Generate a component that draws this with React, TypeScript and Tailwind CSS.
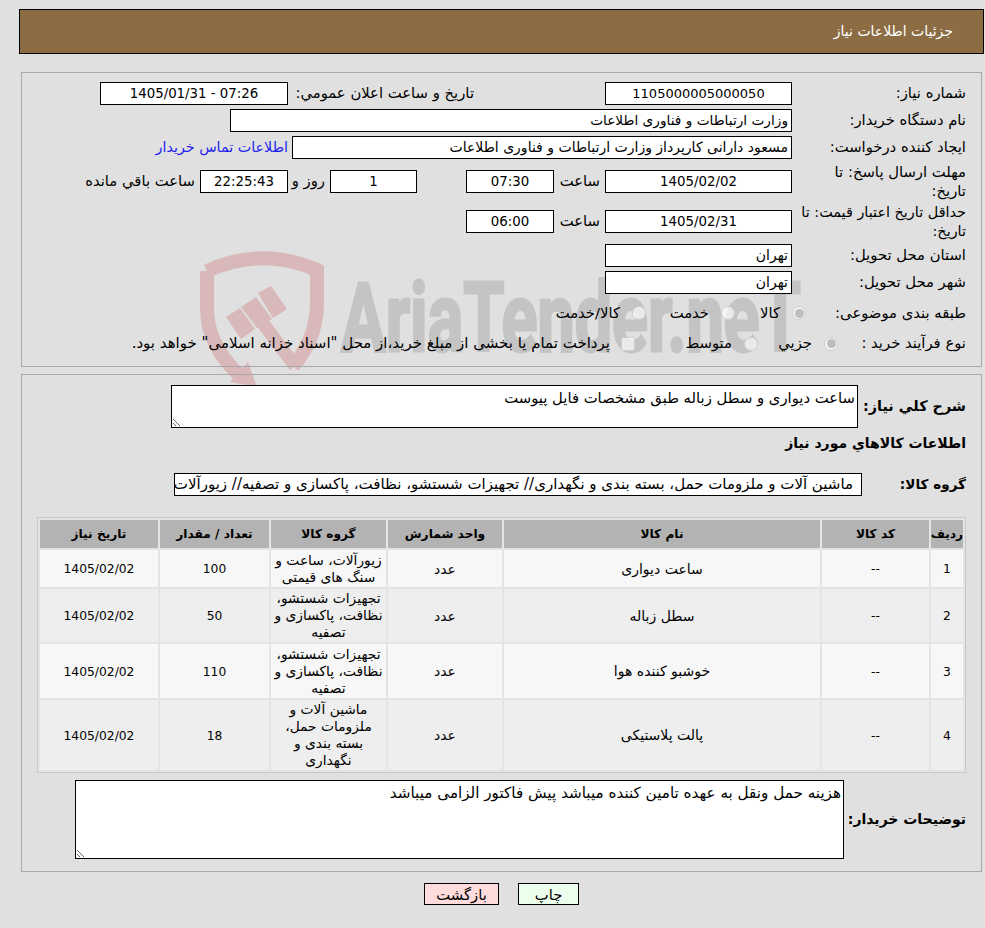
import type { ReactNode } from "react";

function Box({ className, children }: { className: string; children?: ReactNode }) {
  return (
    <div className={"h-[23px] shrink-0 overflow-hidden whitespace-nowrap border border-black bg-white leading-[21px] " + className}>
      {children}
    </div>
  );
}

function Radio({ checked }: { checked?: boolean }) {
  return (
    <span className="flex h-[14px] w-[14px] shrink-0 items-center justify-center rounded-full border border-[#cdcdcd] bg-white/65">
      {checked && <span className="h-[9px] w-[9px] rounded-full bg-[#bdbdbd]" />}
    </span>
  );
}

function Option({ className, checked, children }: { className: string; checked?: boolean; children: ReactNode }) {
  return (
    <div className={"flex shrink-0 items-center gap-3 whitespace-nowrap " + className}>
      <Radio checked={checked} />
      <span>{children}</span>
    </div>
  );
}

function Watermark() {
  return (
    <svg dir="ltr" className="absolute left-0 top-0" width="985" height="928" viewBox="0 0 985 928" fill="none">
      <g stroke="#d9b8b9" strokeWidth="14">
        <path d="M207 271 Q262 246 317 270 L317 305 Q316 340 293 366" />
        <path d="M207 271 L207 310 Q208 345 238 374" />
        <path d="M262 322 L295 366" strokeWidth="13" />
      </g>
      <g fill="#d9b8b9">
        <path d="M248 362 L257 387 L230 382 Z" />
        <path d="M226 317 L240 308 L255 329 L241 339 Z" />
        <path d="M241 307 L256 297 L272 319 L257 328 Z" />
        <path d="M258 293 L271 286 L287 309 L273 318 Z" />
      </g>
      <text x="341" y="351" direction="ltr" fill="#c4c4c4" stroke="#c4c4c4" strokeWidth="3" fontFamily="Roboto, sans-serif" fontWeight="700" fontSize="97" textLength="460" lengthAdjust="spacingAndGlyphs">
        AriaTender.neT
      </text>
    </svg>
  );
}

const rows = [
  { n: "1", name: "ساعت دیواری", group: "زیورآلات، ساعت و سنگ های قیمتی", qty: "100", h: "h-[37px]", bg: "bg-[#f7f7f7]" },
  { n: "2", name: "سطل زباله", group: "تجهیزات شستشو، نظافت، پاکسازی و تصفیه", qty: "50", h: "h-[53px]", bg: "bg-[#eeeeee]" },
  { n: "3", name: "خوشبو کننده هوا", group: "تجهیزات شستشو، نظافت، پاکسازی و تصفیه", qty: "110", h: "h-[54px]", bg: "bg-[#f7f7f7]" },
  { n: "4", name: "پالت پلاستیکی", group: "ماشین آلات و ملزومات حمل، بسته بندی و نگهداری", qty: "18", h: "h-[70px]", bg: "bg-[#eeeeee]" },
];

const heads = [
  { t: "ردیف", w: "w-[32px]" },
  { t: "کد کالا", w: "w-[107px]" },
  { t: "نام کالا", w: "w-[316px]" },
  { t: "واحد شمارش", w: "w-[114px]" },
  { t: "گروه کالا", w: "w-[115px]" },
  { t: "تعداد / مقدار", w: "w-[109px]" },
  { t: "تاریخ نیاز", w: "w-[118px]" },
];

export default function App() {
  return (
    <div dir="rtl" className="relative h-[928px] w-[985px] overflow-hidden bg-[#e0e0e0] font-['DejaVu_Sans',sans-serif] text-[14.8px] text-black">
      <Watermark />
      <div className="relative pt-[9px]">
        <header className="ml-[19px] mr-px flex h-[45px] items-center border border-black bg-[#8c6d43] pr-[30px] text-[14px] text-white">
          جزئیات اطلاعات نیاز
        </header>

        <section className="ml-[21px] mr-[3px] mt-[18px] h-[295px] border border-[#a8a8a8] pr-[15px] pt-[7px]">
          <div className="flex h-[27px] items-center">
            <div className="w-[174px] shrink-0">شماره نیاز:</div>
            <Box className="w-[187px] text-center text-[13px]">1105000005000050</Box>
            <div className="mr-[131px] w-[186px] shrink-0 whitespace-nowrap">تاریخ و ساعت اعلان عمومي:</div>
            <Box className="w-[188px] text-center text-[13.33px]">
              <span dir="ltr">1405/01/31 - 07:26</span>
            </Box>
          </div>
          <div className="flex h-[27px] items-center">
            <div className="w-[174px] shrink-0">نام دستگاه خریدار:</div>
            <Box className="w-[562px] pr-[3px] text-[13.7px]">وزارت ارتباطات و فناوری اطلاعات</Box>
          </div>
          <div className="flex h-[27px] items-center">
            <div className="w-[174px] shrink-0">ایجاد کننده درخواست:</div>
            <Box className="w-[500px] pr-[3px] text-[14px]">مسعود دارانی کارپرداز وزارت ارتباطات و فناوری اطلاعات</Box>
            <a className="mr-[4px] whitespace-nowrap text-[14.3px] text-[#1f1fee]">اطلاعات تماس خریدار</a>
          </div>
          <div className="flex h-[40px] items-center">
            <div className="w-[174px] shrink-0 pl-[6px] leading-[19px]">مهلت ارسال پاسخ: تا تاریخ:</div>
            <Box className="w-[187px] text-center text-[13.33px]">1405/02/02</Box>
            <div className="mr-[5px] w-[46px] shrink-0">ساعت</div>
            <Box className="w-[88px] text-center text-[13.33px]">07:30</Box>
            <Box className="mr-[49px] w-[87px] text-center text-[13.33px]">1</Box>
            <div className="mr-[5px] w-[37px] shrink-0">روز و</div>
            <Box className="w-[88px] bg-[#ffffee] text-center text-[13.33px]">22:25:43</Box>
            <div className="mr-[5px] whitespace-nowrap">ساعت باقي مانده</div>
          </div>
          <div className="flex h-[41px] items-center">
            <div className="w-[174px] shrink-0 text-[14.4px] leading-[19px]">حداقل تاریخ اعتبار قیمت: تا تاریخ:</div>
            <Box className="w-[187px] text-center text-[13.33px]">1405/02/31</Box>
            <div className="mr-[5px] w-[46px] shrink-0">ساعت</div>
            <Box className="w-[88px] text-center text-[13.33px]">06:00</Box>
          </div>
          <div className="flex h-[27px] items-center">
            <div className="w-[174px] shrink-0">استان محل تحویل:</div>
            <Box className="w-[187px] pr-[3px] text-[14px]">تهران</Box>
          </div>
          <div className="flex h-[27px] items-center">
            <div className="w-[174px] shrink-0">شهر محل تحویل:</div>
            <Box className="w-[187px] pr-[3px] text-[14px]">تهران</Box>
          </div>
          <div className="flex h-[34px] items-center">
            <div className="w-[160px] shrink-0 whitespace-nowrap">طبقه بندی موضوعی:</div>
            <Option className="w-[71px]" checked>کالا</Option>
            <Option className="w-[89px]">خدمت</Option>
            <Option className="w-[90px]">کالا/خدمت</Option>
          </div>
          <div className="flex h-[27px] items-center">
            <div className="w-[128px] shrink-0 whitespace-nowrap">نوع فرآیند خرید :</div>
            <Option className="w-[80px]" checked>جزيي</Option>
            <Option className="w-[123px]">متوسط</Option>
            <div className="flex items-center gap-[11px] whitespace-nowrap">
              <span className="h-[14px] w-[14px] shrink-0 rounded-[2px] border border-[#cdcdcd] bg-white/65" />
              <span className="text-[15px]">پرداخت تمام یا بخشی از مبلغ خرید،از محل "اسناد خزانه اسلامی" خواهد بود.</span>
            </div>
          </div>
        </section>

        <section className="ml-[21px] mr-[3px] mt-[7px] border border-[#a8a8a8] pb-[12px] pt-[10px]">
          <div className="flex items-center pr-[15px]">
            <div className="w-[108px] shrink-0 whitespace-nowrap text-[14.4px] font-bold">شرح كلي نياز:</div>
            <textarea
              readOnly
              className="h-[43px] w-[687px] resize border border-black bg-white px-[2px] pt-[3px] leading-[18px]"
              defaultValue="ساعت دیواری و سطل زباله طبق مشخصات فایل پیوست"
            />
          </div>
          <div className="mt-[4px] flex h-[22px] items-center pr-[15px] text-[14px] font-bold">اطلاعات كالاهاي مورد نياز</div>
          <div className="mt-[19px] flex items-center pr-[15px]">
            <div className="w-[104px] shrink-0 whitespace-nowrap text-[13.6px] font-bold">گروه کالا:</div>
            <Box className="w-[688px] pl-[2px] pr-[8px] text-[15px]">ماشین آلات و ملزومات حمل، بسته بندی و نگهداری// تجهیزات شستشو، نظافت، پاکسازی و تصفیه// زیورآلات</Box>
          </div>
          <div className="mx-[15px] mt-[21px]">
            <table className="w-[929px] table-fixed border-separate border-spacing-[2px] border border-[#c8c8c8] bg-[#e4e4e4] text-center text-[14px] leading-[17px]">
              <thead>
                <tr>
                  {heads.map((h) => (
                    <th key={h.t} className={"h-[28px] bg-[#b3b3b3] p-0 text-[12.2px] font-bold " + h.w}>
                      {h.t}
                    </th>
                  ))}
                </tr>
              </thead>
              <tbody>
                {rows.map((r) => (
                  <tr key={r.n} className={r.bg}>
                    <td className={"p-0 pt-[2px] text-[12.3px] " + r.h}>{r.n}</td>
                    <td className="p-0 pt-[2px] text-[12.3px]">--</td>
                    <td className="p-0 pt-px">{r.name}</td>
                    <td className="p-0 pt-px">عدد</td>
                    <td className="px-[2px] py-0 text-[13.8px]">{r.group}</td>
                    <td className="p-0 pt-[2px] text-[12.3px]">{r.qty}</td>
                    <td className="p-0 pt-[2px] text-[12.3px]">1405/02/02</td>
                  </tr>
                ))}
              </tbody>
            </table>
          </div>
          <div className="mt-[7px] flex items-center pr-[15px]">
            <div className="w-[122px] shrink-0 whitespace-nowrap text-[14px] font-bold">توضیحات خریدار:</div>
            <textarea
              readOnly
              className="h-[79px] w-[769px] resize border border-black bg-white px-[2px] pt-[3px] text-[15.2px] leading-[18px]"
              defaultValue="هزینه حمل ونقل به عهده تامین کننده میباشد پیش فاکتور الزامی میباشد"
            />
          </div>
        </section>

        <div className="mt-[11px] flex justify-center gap-[19px] pl-[18px]">
          <button className="h-[22px] w-[61px] border border-black bg-[#ecffec]">چاپ</button>
          <button className="h-[22px] w-[75px] border border-black bg-[#ffdcdc]">بازگشت</button>
        </div>
      </div>
    </div>
  );
}
